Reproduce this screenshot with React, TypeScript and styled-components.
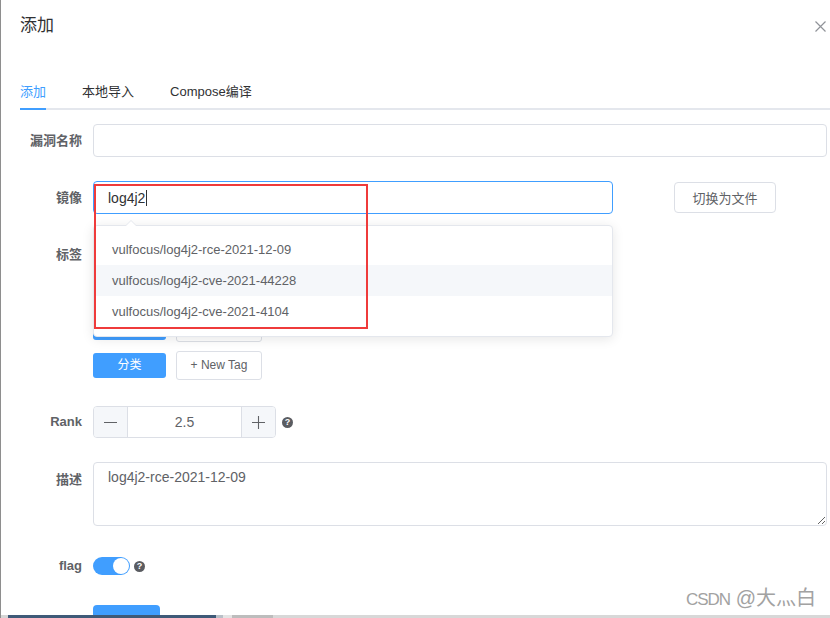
import React from 'react';
import styled, { createGlobalStyle } from 'styled-components';

const GlobalStyle = createGlobalStyle`
  html, body {
    margin: 0;
    padding: 0;
    background: #fff;
  }
  body {
    font-family: "Helvetica Neue", "Liberation Sans", "Noto Sans CJK SC", sans-serif;
  }
`;

const Page = styled.div`
  position: relative;
  width: 830px;
  height: 618px;
  overflow: hidden;
  box-sizing: border-box;
  border-left: 1px solid #8e8e8e;
  padding: 0 3px 0 19px;
  background: #fff;
`;

const Header = styled.div`
  display: flex;
  align-items: center;
  justify-content: space-between;
  padding-top: 14px;
  height: 24px;
`;

const Title = styled.span`
  font-size: 17px;
  line-height: 24px;
  color: #303133;
`;

const CloseButton = styled.span`
  display: flex;
  margin-right: 1px;
  cursor: pointer;
`;

const TabBar = styled.div`
  display: flex;
  margin: 38px -3px 0 0;
  height: 32px;
  border-bottom: 2px solid #e4e7ed;
`;

const Tab = styled.div<{ $active?: boolean }>`
  position: relative;
  margin-right: 36px;
  font-size: 13px;
  line-height: 32px;
  color: ${({ $active }) => ($active ? '#409eff' : '#303133')};

  &::after {
    content: '';
    display: ${({ $active }) => ($active ? 'block' : 'none')};
    position: absolute;
    left: 0;
    right: 0;
    bottom: -2px;
    height: 2px;
    background: #409eff;
  }
`;

const Form = styled.div`
  display: flex;
  flex-direction: column;
  margin-top: 14px;
`;

const Row = styled.div<{ $mt: number }>`
  display: flex;
  align-items: flex-start;
  margin-top: ${({ $mt }) => $mt}px;
`;

const Label = styled.label<{ $lh: number }>`
  flex-shrink: 0;
  box-sizing: border-box;
  width: 73px;
  padding-right: 11px;
  text-align: right;
  font-size: 13px;
  font-weight: bold;
  color: #606266;
  line-height: ${({ $lh }) => $lh}px;
`;

const Field = styled.div<{ $h?: number }>`
  flex: 1;
  display: flex;
  align-items: center;
  ${({ $h }) => ($h ? `height: ${$h}px;` : '')}
`;

const TextInput = styled.div<{ $focused?: boolean; $width?: number }>`
  position: relative;
  box-sizing: border-box;
  display: flex;
  align-items: center;
  width: ${({ $width }) => ($width ? `${$width}px` : '100%')};
  height: 33px;
  padding: 0 14px;
  border: 1px solid ${({ $focused }) => ($focused ? '#409eff' : '#dcdfe6')};
  border-radius: 4px;
  font-size: 14px;
  color: #303133;
  background: #fff;
`;

const Caret = styled.span`
  display: inline-block;
  width: 1px;
  height: 16px;
  margin-left: 1px;
  background: #303133;
`;

const Suggestions = styled.div`
  position: absolute;
  top: calc(100% + 12px);
  left: -1px;
  z-index: 5;
  box-sizing: border-box;
  width: 520px;
  padding: 8px 0 9px;
  border: 1px solid #e4e7ed;
  border-radius: 4px;
  background: #fff;
  box-shadow: 0 2px 12px 0 rgba(0, 0, 0, 0.1);

  &::before,
  &::after {
    content: '';
    position: absolute;
    left: 31px;
    width: 0;
    height: 0;
    border: 6px solid transparent;
    border-top: 0;
  }
  &::before {
    top: -6px;
    border-bottom: 6px solid #e4e7ed;
  }
  &::after {
    top: -5px;
    border-bottom: 6px solid #fff;
  }
`;

const Suggestion = styled.div<{ $hover?: boolean }>`
  height: 31px;
  padding-left: 18px;
  font-size: 13px;
  line-height: 31px;
  color: #606266;
  background: ${({ $hover }) => ($hover ? '#f5f7fa' : '#fff')};
`;

const Highlight = styled.div`
  position: absolute;
  top: 2px;
  left: 0;
  z-index: 6;
  box-sizing: border-box;
  width: 274px;
  height: 145px;
  border: 2px solid #ef3b3b;
  pointer-events: none;
`;

const PlainButton = styled.button`
  box-sizing: border-box;
  width: 102px;
  height: 31px;
  margin-left: 61px;
  padding: 0;
  border: 1px solid #dcdfe6;
  border-radius: 4px;
  background: #fff;
  font-family: inherit;
  font-size: 13px;
  color: #606266;
`;

const TagList = styled.div`
  display: flex;
  flex-direction: column;
  gap: 9px;
`;

const TagRow = styled.div`
  display: flex;
  align-items: center;
  gap: 10px;
  height: 29px;
`;

const CategoryTag = styled.span`
  box-sizing: border-box;
  width: 73px;
  height: 25px;
  border-radius: 3px;
  background: #409eff;
  color: #fff;
  font-size: 12px;
  line-height: 25px;
  text-align: center;
`;

const NewTag = styled.span`
  box-sizing: border-box;
  width: 86px;
  height: 29px;
  border: 1px solid #dcdfe6;
  border-radius: 3px;
  color: #606266;
  font-size: 12px;
  line-height: 27px;
  text-align: center;
`;

const NumberInput = styled.div`
  box-sizing: border-box;
  display: flex;
  width: 183px;
  height: 32px;
  border: 1px solid #dcdfe6;
  border-radius: 4px;
  overflow: hidden;
`;

const Stepper = styled.span<{ $side: 'left' | 'right' }>`
  display: flex;
  align-items: center;
  justify-content: center;
  width: 33px;
  background: #f5f7fa;
  border-${({ $side }) => ($side === 'left' ? 'right' : 'left')}: 1px solid #dcdfe6;
`;

const NumberValue = styled.span`
  flex: 1;
  font-size: 14px;
  line-height: 30px;
  text-align: center;
  color: #606266;
`;

const Help = styled.span<{ $ml: number }>`
  display: inline-flex;
  align-items: center;
  justify-content: center;
  width: 11px;
  height: 11px;
  margin-left: ${({ $ml }) => $ml}px;
  border-radius: 50%;
  background: #5a5c61;
  color: #fff;
  font-size: 9px;
  font-weight: bold;
  line-height: 11px;
`;

const TextArea = styled.textarea`
  box-sizing: border-box;
  width: 100%;
  height: 64px;
  padding: 4px 14px;
  border: 1px solid #dcdfe6;
  border-radius: 4px;
  outline: none;
  resize: vertical;
  font-family: inherit;
  font-size: 14px;
  line-height: 1.5;
  color: #606266;
`;

const Switch = styled.span<{ $on?: boolean }>`
  position: relative;
  box-sizing: border-box;
  width: 37px;
  height: 18px;
  border-radius: 9px;
  background: ${({ $on }) => ($on ? '#409eff' : '#dcdfe6')};

  &::after {
    content: '';
    position: absolute;
    top: 1px;
    ${({ $on }) => ($on ? 'right: 1px;' : 'left: 1px;')}
    width: 16px;
    height: 16px;
    border-radius: 50%;
    background: #fff;
  }
`;

const SubmitButton = styled.button`
  width: 67px;
  height: 36px;
  margin: 23px 0 0 73px;
  padding: 0;
  border: none;
  border-radius: 4px;
  background: #409eff;
  color: #fff;
  font-family: inherit;
  font-size: 13px;
`;

const Watermark = styled.div`
  position: absolute;
  right: 14px;
  bottom: 8px;
  font-size: 20px;
  line-height: 20px;
  color: #a2a2a2;
  text-shadow: 0 0 2px #fff;
  white-space: nowrap;
`;

const Narrow = styled.span`
  font-size: 17px;
  letter-spacing: -1px;
`;

const ScreenEdge = styled.div`
  position: absolute;
  left: 0;
  right: 0;
  bottom: 0;
  height: 3px;
  background: linear-gradient(
    to right,
    #d6d6d6 0 7px,
    #3f5a78 7px 215px,
    #b9c0c8 215px 222px,
    #e4e4e4 222px 231px,
    #bdbdbd 231px 272px,
    #d8d8d8 272px
  );
`;

const CloseIcon = () => (
  <svg width="11" height="11" viewBox="0 0 11 11">
    <path d="M0.5 0.5L10.5 10.5M10.5 0.5L0.5 10.5" stroke="#909399" strokeWidth="1.2" />
  </svg>
);

const LineIcon = ({ plus }: { plus?: boolean }) => (
  <svg width="13" height="13" viewBox="0 0 13 13">
    <path d={plus ? 'M0 6.5H13M6.5 0V13' : 'M0 6.5H13'} stroke="#606266" strokeWidth="1.1" />
  </svg>
);

const suggestions = [
  'vulfocus/log4j2-rce-2021-12-09',
  'vulfocus/log4j2-cve-2021-44228',
  'vulfocus/log4j2-cve-2021-4104',
];

const tagRows = ['漏洞类型', '数据库', '开发语言', '分类'];

export default function App() {
  return (
    <Page>
      <GlobalStyle />
      <Header>
        <Title>添加</Title>
        <CloseButton>
          <CloseIcon />
        </CloseButton>
      </Header>

      <TabBar>
        <Tab $active>添加</Tab>
        <Tab>本地导入</Tab>
        <Tab>Compose编译</Tab>
      </TabBar>

      <Form>
        <Row $mt={0}>
          <Label $lh={33}>漏洞名称</Label>
          <Field>
            <TextInput />
          </Field>
        </Row>

        <Row $mt={24}>
          <Label $lh={33}>镜像</Label>
          <Field>
            <TextInput $focused $width={520}>
              log4j2
              <Caret />
              <Highlight />
              <Suggestions>
                {suggestions.map((s, i) => (
                  <Suggestion key={s} $hover={i === 1}>
                    {s}
                  </Suggestion>
                ))}
              </Suggestions>
            </TextInput>
            <PlainButton>切换为文件</PlainButton>
          </Field>
        </Row>

        <Row $mt={23}>
          <Label $lh={36}>标签</Label>
          <TagList>
            {tagRows.map((t) => (
              <TagRow key={t}>
                <CategoryTag>{t}</CategoryTag>
                <NewTag>+ New Tag</NewTag>
              </TagRow>
            ))}
          </TagList>
        </Row>

        <Row $mt={26}>
          <Label $lh={32}>Rank</Label>
          <Field>
            <NumberInput>
              <Stepper $side="left">
                <LineIcon />
              </Stepper>
              <NumberValue>2.5</NumberValue>
              <Stepper $side="right">
                <LineIcon plus />
              </Stepper>
            </NumberInput>
            <Help $ml={6}>?</Help>
          </Field>
        </Row>

        <Row $mt={24}>
          <Label $lh={36}>描述</Label>
          <Field>
            <TextArea readOnly defaultValue="log4j2-rce-2021-12-09" />
          </Field>
        </Row>

        <Row $mt={24}>
          <Label $lh={32}>flag</Label>
          <Field $h={32}>
            <Switch $on />
            <Help $ml={4}>?</Help>
          </Field>
        </Row>

        <SubmitButton>提交</SubmitButton>
      </Form>

      <Watermark>
        <Narrow>CSDN</Narrow> @大灬白
      </Watermark>
      <ScreenEdge />
    </Page>
  );
}
